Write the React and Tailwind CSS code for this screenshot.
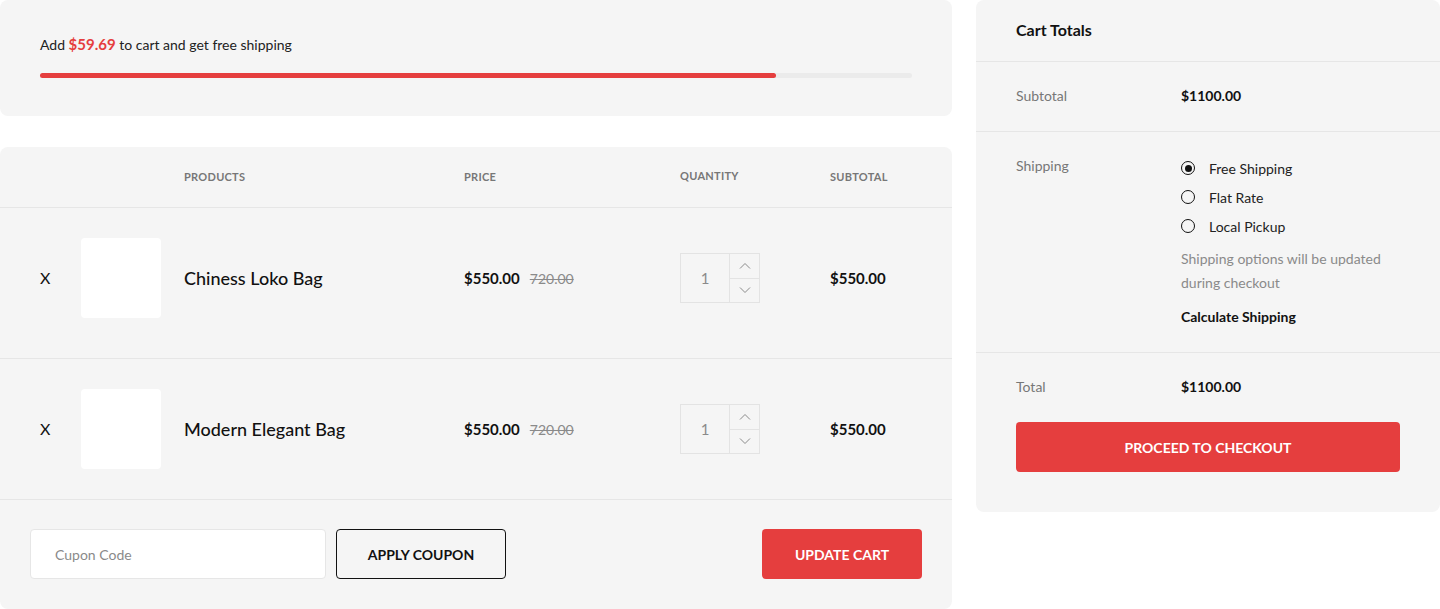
import { useState } from "react";

const items = [
  { id: 1, name: "Chiness Loko Bag", price: "$550.00", old: "720.00", qty: 1, subtotal: "$550.00" },
  { id: 2, name: "Modern Elegant Bag", price: "$550.00", old: "720.00", qty: 1, subtotal: "$550.00" },
];

const shippingOptions = ["Free Shipping", "Flat Rate", "Local Pickup"];

function Chevron({ up }) {
  return (
    <svg width="12" height="7" viewBox="0 0 12 7" fill="none" stroke="#8a8a8a" strokeWidth="1">
      {up ? <path d="M1 6.5L6 1.5L11 6.5" /> : <path d="M1 0.5L6 5.5L11 0.5" />}
    </svg>
  );
}

function QtyBox({ qty }) {
  return (
    <div className="flex h-[50px] w-[80px] border border-[#e3e3e3]">
      <div className="flex w-[49px] items-center justify-center border-r border-[#e3e3e3] text-[15px] text-[#8a8a8a]">
        {qty}
      </div>
      <div className="flex flex-1 flex-col">
        <button className="flex flex-1 items-center justify-center border-b border-[#e3e3e3]">
          <Chevron up />
        </button>
        <button className="flex flex-1 items-center justify-center">
          <Chevron />
        </button>
      </div>
    </div>
  );
}

function CartRow({ item, extra }) {
  return (
    <div
      className={`grid grid-cols-[41px_103px_280px_216px_150px_1fr] items-center border-b border-[#e6e6e6] pl-10 pt-[30px] ${
        extra ? "pb-[40px]" : "pb-[30px]"
      }`}
    >
      <span className="text-[16px] text-[#111]">X</span>
      <div className="h-[80px] w-[80px] rounded bg-white" />
      <span className="text-[18px] font-medium text-[#111]">{item.name}</span>
      <div className="flex items-center gap-[10px]">
        <span className="text-[15px] font-bold text-[#111]">{item.price}</span>
        <span className="text-[14px] text-[#8a8a8a] line-through">{item.old}</span>
      </div>
      <QtyBox qty={item.qty} />
      <span className="text-[15px] font-bold text-[#111]">{item.subtotal}</span>
    </div>
  );
}

export default function App() {
  const [shipping, setShipping] = useState(0);

  return (
    <div className="flex w-[1440px] gap-6 bg-white font-['Lato',sans-serif] text-[#111]">
      {/* Left column */}
      <div className="flex w-[952px] flex-col gap-[31px]">
        {/* Free shipping progress */}
        <div className="h-[116px] rounded-lg bg-[#f5f5f5] px-10 pt-[33px]">
          <p className="text-[14px] text-[#222]">
            Add <span className="text-[15px] font-bold text-[#e53e3e]">$59.69</span> to cart and get free shipping
          </p>
          <div className="mt-[17px] h-[5px] w-full rounded-full bg-[#ebebeb]">
            <div className="h-full w-[84.4%] rounded-full bg-[#e53e3e]" />
          </div>
        </div>

        {/* Cart table */}
        <div className="rounded-lg bg-[#f5f5f5]">
          <div className="grid h-[61px] grid-cols-[41px_103px_280px_216px_150px_1fr] items-center border-b border-[#e6e6e6] pl-10 text-[11px] font-bold uppercase tracking-wide text-[#777]">
            <span />
            <span />
            <span>Products</span>
            <span>Price</span>
            <span className="-mt-[2px]">Quantity</span>
            <span>Subtotal</span>
          </div>
          {items.map((item, i) => (
            <CartRow key={item.id} item={item} extra={i === 0} />
          ))}
          <div className="flex items-center justify-between pb-[30px] pl-[30px] pr-[30px] pt-[29px]">
            <div className="flex gap-[10px]">
              <input
                placeholder="Cupon Code"
                className="h-[50px] w-[296px] rounded border border-[#e6e6e6] bg-white px-6 text-[14px] text-[#111] placeholder:text-[#8a8a8a] outline-none"
              />
              <button className="h-[50px] w-[170px] rounded border border-[#111] text-[14px] font-bold uppercase text-[#111]">
                Apply Coupon
              </button>
            </div>
            <button className="h-[50px] w-[160px] rounded bg-[#e53e3e] text-[14px] font-bold uppercase text-white">
              Update Cart
            </button>
          </div>
        </div>
      </div>

      {/* Cart totals */}
      <div className="h-[512px] w-[464px] rounded-lg bg-[#f5f5f5]">
        <div className="flex h-[62px] items-center border-b border-[#e6e6e6] px-10 pb-[2px]">
          <h2 className="text-[16px] font-bold text-[#111]">Cart Totals</h2>
        </div>
        <div className="grid h-[70px] grid-cols-[165px_1fr] items-center border-b border-[#e6e6e6] px-10 pb-[2px] text-[14px]">
          <span className="text-[#777]">Subtotal</span>
          <span className="font-bold text-[#111]">$1100.00</span>
        </div>
        <div className="grid grid-cols-[165px_1fr] border-b border-[#e6e6e6] px-10 pb-[25px] pt-[23px] text-[14px]">
          <span className="text-[#777]">Shipping</span>
          <div className="flex flex-col">
            <div className="flex flex-col gap-[7px] pt-[2px]">
              {shippingOptions.map((opt, i) => (
                <label key={opt} className="flex h-[22px] cursor-pointer items-center gap-[14px] text-[#222]" onClick={() => setShipping(i)}>
                  <span className="flex h-[14px] w-[14px] items-center justify-center rounded-full border-[1.5px] border-[#111]">
                    {shipping === i && <span className="h-[7px] w-[7px] rounded-full bg-[#111]" />}
                  </span>
                  {opt}
                </label>
              ))}
            </div>
            <p className="mt-[10px] text-[14px] leading-6 text-[#8a8a8a]">
              Shipping options will be updated
              <br />
              during checkout
            </p>
            <span className="mt-[11px] font-bold text-[#111]">Calculate Shipping</span>
          </div>
        </div>
        <div className="px-10 pt-[23px]">
          <div className="grid grid-cols-[165px_1fr] text-[14px]">
            <span className="text-[#777]">Total</span>
            <span className="font-bold text-[#111]">$1100.00</span>
          </div>
          <button className="mt-[25px] h-[50px] w-full rounded bg-[#e53e3e] text-[14px] font-bold uppercase text-white">
            Proceed to Checkout
          </button>
        </div>
      </div>
    </div>
  );
}
